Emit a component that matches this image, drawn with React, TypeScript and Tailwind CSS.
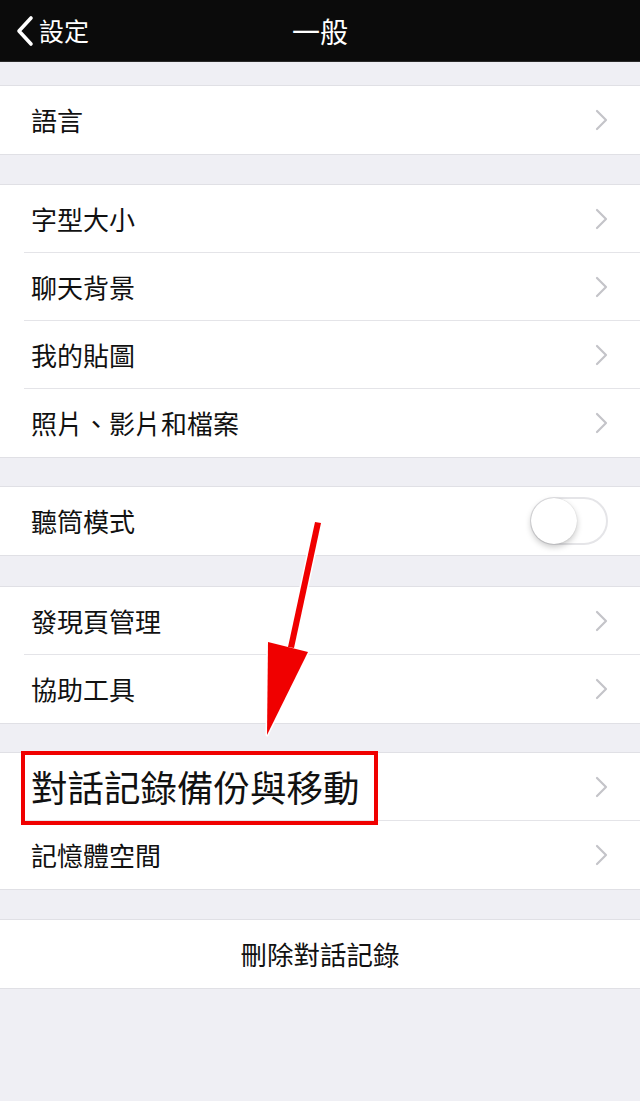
import React from "react";

const FONT = { fontFamily: '"Noto Sans CJK TC", "Noto Sans", sans-serif' };

function Chevron() {
  return (
    <svg width="13" height="22" viewBox="0 0 13 22" className="shrink-0">
      <path d="M2 2 L11 11 L2 20" fill="none" stroke="#c4c4c9" strokeWidth="2.2" strokeLinecap="round" strokeLinejoin="round" />
    </svg>
  );
}

function Row({ label, last, children, big }: { label: string; last?: boolean; children?: React.ReactNode; big?: boolean }) {
  return (
    <div className="relative flex h-[68px] items-center pl-[31px]">
      <span className={big ? "text-[36.5px] leading-none text-[#111]" : "text-[26px] leading-none text-[#111]"}>{label}</span>
      <div className="ml-auto mr-[32px] flex items-center">{children ?? <Chevron />}</div>
      {!last && <div className="absolute bottom-0 left-[24px] right-0 h-px bg-[#e4e4e8]" />}
    </div>
  );
}

function Section({ children }: { children: React.ReactNode }) {
  return <div className="bg-white shadow-[0_-1px_0_#e0e0e5,0_1px_0_#e0e0e5]">{children}</div>;
}

export default function App() {
  return (
    <div className="relative h-[1101px] w-[640px] overflow-hidden bg-[#efeff4]" style={FONT}>
      <div className="relative flex h-[62px] items-center justify-center border-b border-[#2a2a2a] bg-[#0b0b0b]">
        <div className="absolute left-[15px] top-0 flex h-full items-center">
          <svg width="20" height="32" viewBox="0 0 20 32">
            <path d="M16 3 L4 16 L16 29" fill="none" stroke="#fff" strokeWidth="3.6" strokeLinecap="round" strokeLinejoin="round" />
          </svg>
          <span className="ml-[4px] text-[25px] leading-none text-white">設定</span>
        </div>
        <span className="text-[28px] leading-none text-white">一般</span>
      </div>

      <div className="h-[24px]" />
      <Section>
        <Row label="語言" last />
      </Section>

      <div className="h-[31px]" />
      <Section>
        <Row label="字型大小" />
        <Row label="聊天背景" />
        <Row label="我的貼圖" />
        <Row label="照片、影片和檔案" last />
      </Section>

      <div className="h-[30px]" />
      <Section>
        <Row label="聽筒模式" last>
          <div className="relative h-[48px] w-[78px] rounded-full border-2 border-[#e5e5e8] bg-white">
            <div className="absolute -left-[1px] -top-[1px] h-[46px] w-[46px] rounded-full bg-white shadow-[0_3px_6px_rgba(0,0,0,0.22),0_0_1px_rgba(0,0,0,0.2)]" />
          </div>
        </Row>
      </Section>

      <div className="h-[32px]" />
      <Section>
        <Row label="發現頁管理" />
        <Row label="協助工具" last />
      </Section>

      <div className="h-[30px]" />
      <Section>
        <div className="relative">
          <Row label="對話記錄備份與移動" big />
          <div className="pointer-events-none absolute left-[21px] top-[-2px] h-[74px] w-[357px] border-[4px] border-[#f00000]" />
        </div>
        <Row label="記憶體空間" last />
      </Section>

      <div className="h-[31px]" />
      <Section>
        <div className="flex h-[68px] items-center justify-center">
          <span className="text-[26.5px] leading-none text-[#111]">刪除對話記錄</span>
        </div>
      </Section>

      <svg className="pointer-events-none absolute left-0 top-0" width="640" height="1101" viewBox="0 0 640 1101">
        <g stroke="#fff" strokeWidth="3" strokeLinejoin="round">
          <polygon points="315,522 321,523 294,648 288,647" fill="#f00000" />
          <polygon points="268,642 308,652 267,735" fill="#f00000" />
        </g>
        <polygon points="315,522 321,523 294,648 288,647" fill="#f00000" />
        <polygon points="268,642 308,652 267,735" fill="#f00000" />
      </svg>
    </div>
  );
}
